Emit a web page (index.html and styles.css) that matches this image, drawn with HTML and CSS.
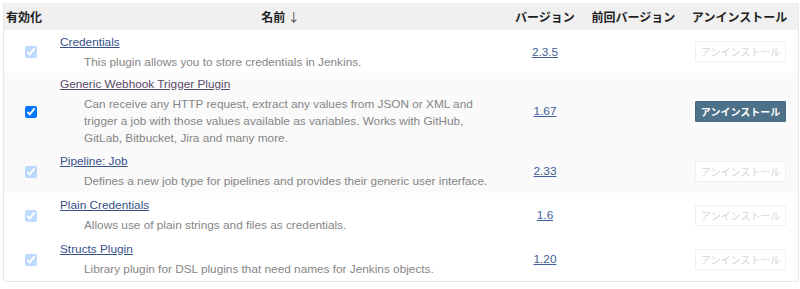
FILE: index.html
```html
<!DOCTYPE html>
<html lang="ja">
<head>
    <meta charset="UTF-8">
    <title>プラグインマネージャー</title>
    <link rel="stylesheet" href="styles.css">
</head>
<body>
    <!-- Installed plugins -->
    <div class="plugins">
        <table class="plugin-table">
            <colgroup>
                <col class="col-enable">
                <col class="col-name">
                <col class="col-version">
                <col class="col-prev">
                <col class="col-uninstall">
            </colgroup>
            <thead>
                <tr>
                    <th class="th-enable">有効化</th>
                    <th>名前 <span class="sort-arrow">↓</span></th>
                    <th>バージョン</th>
                    <th>前回バージョン</th>
                    <th>アンインストール</th>
                </tr>
            </thead>
            <tbody>
                <tr class="row-first">
                    <td class="enable"><input type="checkbox" class="locked" checked tabindex="-1"></td>
                    <td class="name">
                        <a href="#">Credentials</a>
                        <div class="desc">This plugin allows you to store credentials in Jenkins.</div>
                    </td>
                    <td class="version"><a href="#">2.3.5</a></td>
                    <td></td>
                    <td class="uninstall"><button disabled>アンインストール</button></td>
                </tr>
                <tr class="shaded">
                    <td class="enable"><input type="checkbox" checked></td>
                    <td class="name">
                        <a href="#" class="visited">Generic Webhook Trigger Plugin</a>
                        <div class="desc">Can receive any HTTP request, extract any values from JSON or XML and trigger a job with those values available as variables. Works with GitHub, GitLab, Bitbucket, Jira and many more.</div>
                    </td>
                    <td class="version"><a href="#">1.67</a></td>
                    <td></td>
                    <td class="uninstall"><button>アンインストール</button></td>
                </tr>
                <tr class="shaded row-short">
                    <td class="enable"><input type="checkbox" class="locked" checked tabindex="-1"></td>
                    <td class="name">
                        <a href="#">Pipeline: Job</a>
                        <div class="desc">Defines a new job type for pipelines and provides their generic user interface.</div>
                    </td>
                    <td class="version"><a href="#">2.33</a></td>
                    <td></td>
                    <td class="uninstall"><button disabled>アンインストール</button></td>
                </tr>
                <tr class="row-short">
                    <td class="enable"><input type="checkbox" class="locked" checked tabindex="-1"></td>
                    <td class="name">
                        <a href="#">Plain Credentials</a>
                        <div class="desc">Allows use of plain strings and files as credentials.</div>
                    </td>
                    <td class="version"><a href="#">1.6</a></td>
                    <td></td>
                    <td class="uninstall"><button disabled>アンインストール</button></td>
                </tr>
                <tr class="row-short">
                    <td class="enable"><input type="checkbox" class="locked" checked tabindex="-1"></td>
                    <td class="name">
                        <a href="#">Structs Plugin</a>
                        <div class="desc">Library plugin for DSL plugins that need names for Jenkins objects.</div>
                    </td>
                    <td class="version"><a href="#">1.20</a></td>
                    <td></td>
                    <td class="uninstall"><button disabled>アンインストール</button></td>
                </tr>
            </tbody>
        </table>
    </div>
</body>
</html>
```

FILE: styles.css
```css
* {
    box-sizing: border-box;
    margin: 0;
    padding: 0;
}
body {
    font-family: 'Liberation Sans', Arial, 'Noto Sans CJK JP', sans-serif;
    font-size: 11.8px;
    color: #333;
    background: #fff;
}
.plugins {
    padding: 3px 3px 0 3px;
}

/* Table */
.plugin-table {
    width: 794px;
    table-layout: fixed;
    border-collapse: separate;
    border-spacing: 0;
    border: 1px solid #e8e8e8;
    border-top: none;
    border-radius: 0 0 4px 4px;
}
.col-enable { width: 53px; }
.col-name { width: 447px; }
.col-version { width: 82px; }
.col-prev { width: 95px; }
.col-uninstall { width: 117px; }

.plugin-table th {
    background: #f0f0f0;
    height: 27px;
    font-family: 'Noto Sans CJK JP', sans-serif;
    font-size: 12px;
    font-weight: 700;
    color: #1e1e1e;
    text-align: center;
    white-space: nowrap;
    padding: 0;
}
.plugin-table th.th-enable {
    text-align: left;
    padding-left: 2px;
}
.sort-arrow {
    font-weight: 400;
    color: #444;
}

.plugin-table td {
    vertical-align: middle;
}
.plugin-table tr.shaded td {
    background: #fafafa;
}
.row-first {
    height: 43px;
}
.row-short {
    height: 44px;
}

.enable {
    text-align: center;
}
.enable input {
    width: 12px;
    height: 12px;
    margin: 0;
    vertical-align: middle;
}
.enable input.locked {
    opacity: 0.25;
    pointer-events: none;
}

.name {
    padding: 2px 3px 2px 3px;
}
.name a {
    display: block;
    line-height: 18px;
    color: #36508a;
}
.name a.visited {
    color: #5b4a6c;
}
.desc {
    margin: 3px 0 0 24px;
    line-height: 17px;
    color: #858585;
}

.version {
    text-align: center;
}
.version a {
    color: #3f5f96;
}

.uninstall {
    padding-left: 14px;
}
.uninstall button {
    width: 91px;
    height: 21px;
    font-family: 'Noto Sans CJK JP', sans-serif;
    font-size: 10px;
    font-weight: 700;
    color: #fff;
    background: #4d7188;
    border: 1px solid #46677d;
    border-radius: 1px;
    cursor: pointer;
}
.uninstall button:disabled {
    font-weight: 400;
    color: #d6d6d6;
    background: #fff;
    border: 1px solid #f0f0f0;
    cursor: default;
}
```
